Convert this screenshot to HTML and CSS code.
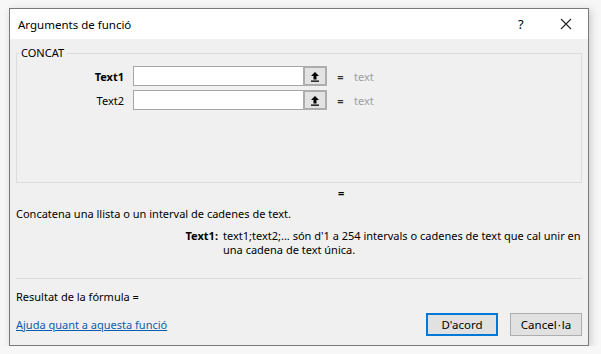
FILE: index.html
```html
<!DOCTYPE html>
<html lang="ca">
<head>
    <meta charset="UTF-8">
    <meta name="viewport" content="width=device-width, initial-scale=1.0">
    <title>Arguments de funció</title>
    <link rel="stylesheet" href="styles.css">
</head>
<body>
    <div class="dialog">
        <div class="titlebar">
            <span class="title">Arguments de funció</span>
            <span class="help">?</span>
            <span class="close">
                <svg width="12" height="12" viewBox="0 0 12 12"><path d="M1 1L11 11M11 1L1 11" stroke="#222" stroke-width="1.1" fill="none"/></svg>
            </span>
        </div>
        <div class="content">
            <fieldset class="group">
                <legend>CONCAT</legend>
                <div class="args">
                    <label class="arg-name bold">Text1</label>
                    <div class="field"><input type="text"><button class="pick"><svg width="10" height="11" viewBox="0 0 10 11"><path d="M5 1L1 5H3.5V8.5H6.5V5H9Z" fill="#000"/><rect x="1" y="9.5" width="8" height="1.3" fill="#000"/></svg></button></div>
                    <span class="eq">=</span>
                    <span class="val">text</span>

                    <label class="arg-name">Text2</label>
                    <div class="field"><input type="text"><button class="pick"><svg width="10" height="11" viewBox="0 0 10 11"><path d="M5 1L1 5H3.5V8.5H6.5V5H9Z" fill="#000"/><rect x="1" y="9.5" width="8" height="1.3" fill="#000"/></svg></button></div>
                    <span class="eq">=</span>
                    <span class="val">text</span>
                </div>
            </fieldset>
            <div class="result-eq">=</div>
            <p class="summary">Concatena una llista o un interval de cadenes de text.</p>
            <div class="argdesc">
                <span class="bold">Text1:</span>
                <span>text1;text2;... són d'1 a 254 intervals o cadenes de text que cal unir en una cadena de text única.</span>
            </div>
            <hr class="sep">
            <p class="formula">Resultat de la fórmula =</p>
            <div class="footer">
                <a href="#" class="helplink">Ajuda quant a aquesta funció</a>
                <div class="buttons">
                    <button class="btn default">D'acord</button>
                    <button class="btn">Cancel<span class="middot">·</span>la</button>
                </div>
            </div>
        </div>
    </div>
</body>
</html>
```

FILE: styles.css
```css
body{
    margin: 0;
    background: #f7f7f7;
    font-family: "Noto Sans", "Open Sans", sans-serif;
    font-size: 11px;
    color: #000;
}
.dialog{
    margin: 8px 0 0 9px;
    width: 578px;
    height: 336px;
    border: 1px solid #7a7a7a;
    background: #f0f0f0;
    box-shadow: 2px 2px 8px rgba(0,0,0,0.18);
    display: flex;
    flex-direction: column;
}
.titlebar{
    height: 30px;
    background: #fff;
    display: flex;
    align-items: center;
    padding-left: 8px;
}
.title{
    flex: 1;
    font-size: 11.5px;
}
.help{
    width: 12px;
    margin-right: 30px;
    font-size: 13px;
}
.close{
    width: 12px;
    margin-right: 16px;
    display: flex;
}
.content{
    flex: 1;
    padding: 0 6px;
    display: flex;
    flex-direction: column;
}
.group{
    margin: 7px 0 0 0;
    padding: 5px 0 0 0;
    height: 130px;
    border: 1px solid #dcdcdc;
}
.group legend{
    padding: 0 3px 0 2px;
    margin-left: 2px;
    line-height: 14px;
}
.args{
    display: grid;
    grid-template-columns: 107px 197px 14px auto;
    column-gap: 6px;
    row-gap: 4px;
    align-items: center;
    margin-top: 1px;
}
.args .field{
    margin-left: 3px;
}
.arg-name{
    text-align: right;
}
.bold{
    font-weight: bold;
}
.field{
    display: flex;
    height: 20px;
}
.field input{
    flex: 1;
    min-width: 0;
    margin: 0;
    border: 1px solid #a5a5a5;
    border-right: none;
    height: 20px;
    box-sizing: border-box;
    padding: 0;
}
.pick{
    width: 24px;
    height: 20px;
    margin: 0;
    padding: 0;
    box-sizing: border-box;
    border: 2px solid #adadad;
    background: #e3e3e3;
    display: flex;
    align-items: center;
    justify-content: center;
}
.eq{
    text-align: center;
    font-weight: bold;
    color: #333;
    margin-left: 1px;
}
.val{
    color: #a0a0a0;
    margin-left: 1px;
}
.result-eq{
    margin: 3px 0 0 322px;
    font-weight: bold;
    line-height: 14px;
}
.summary{
    margin: 6px 0 0 0;
    line-height: 16px;
}
.argdesc{
    display: grid;
    grid-template-columns: 202px 1fr;
    column-gap: 5px;
    margin-top: 7px;
    line-height: 14px;
}
.argdesc .bold{
    text-align: right;
}
.sep{
    margin: 21px 0 0 0;
    border: none;
    border-top: 1px solid #dadada;
}
.formula{
    margin: 11px 0 0 0;
    line-height: 14px;
}
.footer{
    display: flex;
    align-items: center;
    justify-content: space-between;
    margin-top: 9px;
}
.helplink{
    color: #0b5cad;
}
.buttons{
    display: flex;
    gap: 12px;
}
.btn{
    width: 72px;
    height: 23px;
    font-family: inherit;
    font-size: 11.5px;
    background: #e1e1e1;
    border: 1px solid #adadad;
    padding: 0;
}
.btn.default{
    border: 2px solid #0078d7;
}
.middot{
    margin: 0 1px;
}
```
